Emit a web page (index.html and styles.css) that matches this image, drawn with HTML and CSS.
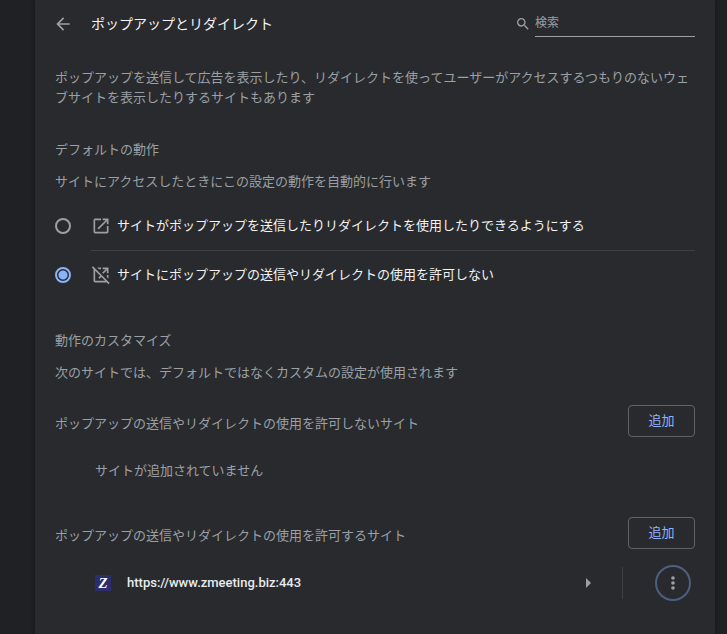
FILE: index.html
```html
<!DOCTYPE html>
<html lang="ja">
<head>
  <meta charset="UTF-8">
  <meta name="viewport" content="width=device-width, initial-scale=1.0">
  <title>ポップアップとリダイレクト</title>
  <link rel="stylesheet" href="styles.css">
</head>
<body>
  <main class="panel">
    <!-- Header -->
    <header class="header">
      <button class="icon-btn" type="button" aria-label="戻る">
        <svg viewBox="0 0 24 24" width="20" height="20"><path d="M20 11H7.83l5.59-5.59L12 4l-8 8 8 8 1.41-1.41L7.83 13H20v-2z"/></svg>
      </button>
      <h1>ポップアップとリダイレクト</h1>
      <div class="search">
        <label for="search" aria-label="検索">
          <svg viewBox="0 0 24 24" width="16" height="16"><path d="M15.5 14h-.79l-.28-.27A6.471 6.471 0 0 0 16 9.5 6.5 6.5 0 1 0 9.5 16c1.61 0 3.09-.59 4.23-1.57l.27.28v.79l5 4.99L20.49 19l-4.99-5zm-6 0C7.01 14 5 11.99 5 9.5S7.01 5 9.5 5 14 7.01 14 9.5 11.99 14 9.5 14z"/></svg>
        </label>
        <input type="search" id="search" placeholder="検索">
      </div>
    </header>

    <p class="description">ポップアップを送信して広告を表示したり、リダイレクトを使ってユーザーがアクセスするつもりのないウェブサイトを表示したりするサイトもあります</p>

    <!-- Default behavior -->
    <section class="section">
      <h2>デフォルトの動作</h2>
      <p class="hint">サイトにアクセスしたときにこの設定の動作を自動的に行います</p>
      <div class="options">
        <div class="option">
          <input type="radio" name="popups" id="allow">
          <label for="allow">
            <svg viewBox="0 0 24 24" width="20" height="20"><path d="M19 19H5V5h7V3H5a2 2 0 0 0-2 2v14a2 2 0 0 0 2 2h14c1.1 0 2-.9 2-2v-7h-2v7zM14 3v2h3.59l-9.83 9.83 1.41 1.41L19 6.41V10h2V3h-7z"/></svg>
            <span>サイトがポップアップを送信したりリダイレクトを使用したりできるようにする</span>
          </label>
        </div>
        <div class="option">
          <input type="radio" name="popups" id="block" checked>
          <label for="block">
            <svg viewBox="0 0 24 24" width="20" height="20"><path d="M2.4 1.6 22.4 21.6 21 23l-2-2H5a2 2 0 0 1-2-2V5L1 3zM5 7v12h12l-4.600-4.600-2.200 2.200-1.400-1.400 2.200-2.200zM7.500 3H12v2H9.500zM14 3h7v7h-2V6.400l-4.200 4.200-1.400-1.400L17.600 5H14zM19 12h2v4.500l-2-2z"/></svg>
            <span>サイトにポップアップの送信やリダイレクトの使用を許可しない</span>
          </label>
        </div>
      </div>
    </section>

    <!-- Custom behavior -->
    <section class="section">
      <h2>動作のカスタマイズ</h2>
      <p class="hint">次のサイトでは、デフォルトではなくカスタムの設定が使用されます</p>

      <div class="list-head">
        <h3>ポップアップの送信やリダイレクトの使用を許可しないサイト</h3>
        <button class="btn-add" type="button">追加</button>
      </div>
      <p class="empty">サイトが追加されていません</p>

      <div class="list-head">
        <h3>ポップアップの送信やリダイレクトの使用を許可するサイト</h3>
        <button class="btn-add" type="button">追加</button>
      </div>
      <div class="site">
        <span class="favicon">Z</span>
        <span class="site-url">https://www.zmeeting.biz:443</span>
        <button class="icon-btn" type="button" aria-label="詳細">
          <svg viewBox="0 0 20 20" width="20" height="20"><path d="M8 5l5 5-5 5z"/></svg>
        </button>
        <div class="site-menu">
          <button class="btn-more" type="button" aria-label="その他の操作">
            <svg viewBox="0 0 24 24" width="20" height="20"><circle cx="12" cy="6" r="2.200"/><circle cx="12" cy="12" r="2.200"/><circle cx="12" cy="18" r="2.200"/></svg>
          </button>
        </div>
      </div>
    </section>
  </main>
</body>
</html>
```

FILE: styles.css
```css
* { margin: 0; padding: 0; box-sizing: border-box; }
body { display: flex; min-height: 100vh; padding: 0 12px 0 35px; background: #202124; color: #9aa0a6; font-family: Roboto, "Noto Sans CJK JP", sans-serif; font-size: 13px; line-height: 20px; }
h1, h2, h3 { font-size: 13px; font-weight: 400; }
svg { display: block; flex: none; fill: #9aa0a6; }
button, input { font: inherit; color: inherit; background: none; border: none; }
button { cursor: pointer; }

.panel { flex: 1; min-width: 0; padding: 0 20px 16px; background: #292a2d; box-shadow: 0 0 5px rgba(0,0,0,0.4); }

/* Header */
.header { display: flex; align-items: center; height: 47px; }
.header h1 { flex: 1; margin-left: 18px; color: #f1f3f4; font-size: 14px; }
.icon-btn { width: 20px; height: 20px; margin-left: -2px; }
.search { display: flex; align-items: center; gap: 4px; }
.search input { width: 160px; height: 26px; border-bottom: 1px solid #9aa0a6; border-radius: 0; outline: none; font-size: 12px; appearance: none; }
.search input::placeholder { color: #9aa0a6; opacity: 1; }

.description { padding-top: 21px; }

/* Sections */
.section { padding-top: 32px; }
.hint { margin-top: 12px; }
.options { margin-top: 10px; }
.option { display: flex; align-items: center; }
.option input { flex: none; width: 16px; height: 16px; border: 2px solid #9aa0a6; border-radius: 50%; appearance: none; }
.option input:checked { border-color: #8ab4f8; background: radial-gradient(circle, #8ab4f8 4px, transparent 5px); }
.option label { display: flex; flex: 1; align-items: center; gap: 6px; min-height: 48px; margin-left: 20px; color: #f1f3f4; cursor: pointer; }
.option + .option label { border-top: 1px solid #3f4042; min-height: 49px; }

/* Site lists */
.list-head { display: flex; align-items: center; justify-content: space-between; margin-top: 22px; }
.list-head h3 { padding-top: 6px; }
.btn-add { width: 67px; height: 32px; border: 1px solid #5f6368; border-radius: 4px; color: #8ab4f8; }
.empty { margin: 24px 0 36px 40px; }
.site { display: flex; align-items: center; height: 48px; margin: 10px 0 0 40px; }
.favicon { width: 16px; height: 16px; background: #2b2d6e; color: #fff; font: italic bold 15px/16px "Liberation Serif", serif; text-align: center; }
.site-url { flex: 1; margin-left: 16px; color: #e8eaed; font-weight: 500; }
.site-menu { display: flex; align-items: center; height: 32px; margin-left: 24px; padding: 0 4px 0 32px; border-left: 1px solid #3f4042; }
.btn-more { display: flex; align-items: center; justify-content: center; width: 36px; height: 36px; border: 2px solid #4c5f80; border-radius: 50%; }
```
